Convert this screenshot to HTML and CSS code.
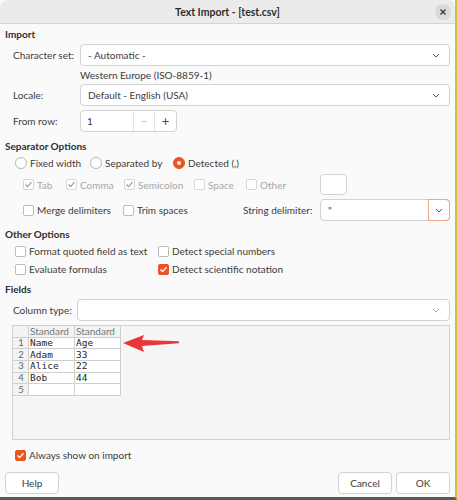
FILE: index.html
```html
<!DOCTYPE html>
<html lang="en">
<head>
    <meta charset="UTF-8">
    <title>Text Import - [test.csv]</title>
    <link rel="stylesheet" href="styles.css">
</head>
<body>
<div class="screen">
<div class="dialog">

    <!-- Window title -->
    <header class="titlebar">
        <span class="title">Text Import - [test.csv]</span>
        <span class="close">
            <svg width="8" height="8" viewBox="0 0 8 8"><path d="M1.5 1.5 L6.5 6.5 M6.5 1.5 L1.5 6.5" stroke="#3a3a3a" stroke-width="1.3"/></svg>
        </span>
    </header>

    <main class="content">

        <!-- Import -->
        <div class="heading">Import</div>
        <div class="field-row">
            <span class="field-label">Character set:</span>
            <div class="combo">
                <span>- Automatic -</span>
                <svg class="chev" width="8" height="5" viewBox="0 0 8 5"><polyline points="1,1 4,4 7,1" fill="none" stroke="#555" stroke-width="1"/></svg>
            </div>
        </div>
        <div class="hint">Western Europe (ISO-8859-1)</div>
        <div class="field-row">
            <span class="field-label">Locale:</span>
            <div class="combo">
                <span>Default - English (USA)</span>
                <svg class="chev" width="8" height="5" viewBox="0 0 8 5"><polyline points="1,1 4,4 7,1" fill="none" stroke="#555" stroke-width="1"/></svg>
            </div>
        </div>
        <div class="field-row spin-row">
            <span class="field-label">From row:</span>
            <div class="spin">
                <span class="spin-value">1</span>
                <span class="spin-btn disabled">&minus;</span>
                <span class="spin-btn">+</span>
            </div>
        </div>

        <!-- Separator Options -->
        <div class="heading sep-heading">Separator Options</div>
        <div class="radio-row">
            <span class="opt"><span class="radio"></span>Fixed width</span>
            <span class="opt"><span class="radio"></span>Separated by</span>
            <span class="opt"><span class="radio on"></span>Detected (,)</span>
        </div>
        <div class="sep-row">
            <span class="opt disabled"><span class="check ticked"><svg width="11" height="11" viewBox="0 0 11 11"><polyline points="2.5,5.5 4.6,7.6 8.5,3.2" fill="none" stroke="#9a9a9a" stroke-width="1.2"/></svg></span>Tab</span>
            <span class="opt disabled"><span class="check ticked"><svg width="11" height="11" viewBox="0 0 11 11"><polyline points="2.5,5.5 4.6,7.6 8.5,3.2" fill="none" stroke="#9a9a9a" stroke-width="1.2"/></svg></span>Comma</span>
            <span class="opt disabled"><span class="check ticked"><svg width="11" height="11" viewBox="0 0 11 11"><polyline points="2.5,5.5 4.6,7.6 8.5,3.2" fill="none" stroke="#9a9a9a" stroke-width="1.2"/></svg></span>Semicolon</span>
            <span class="opt disabled"><span class="check"></span>Space</span>
            <span class="opt disabled"><span class="check"></span>Other</span>
            <span class="other-box"></span>
        </div>
        <div class="delim-row">
            <span class="opt"><span class="check"></span>Merge delimiters</span>
            <span class="opt"><span class="check"></span>Trim spaces</span>
            <span class="delim-label">String delimiter:</span>
            <div class="delim-combo">
                <span class="delim-value">"</span>
                <span class="delim-btn">
                    <svg width="8" height="5" viewBox="0 0 8 5"><polyline points="1,1 4,4 7,1" fill="none" stroke="#555" stroke-width="1"/></svg>
                </span>
            </div>
        </div>

        <!-- Other Options -->
        <div class="heading other-heading">Other Options</div>
        <div class="options-grid">
            <span class="opt"><span class="check"></span>Format quoted field as text</span>
            <span class="opt"><span class="check"></span>Detect special numbers</span>
            <span class="opt"><span class="check"></span>Evaluate formulas</span>
            <span class="opt"><span class="check on"><svg width="11" height="11" viewBox="0 0 11 11"><polyline points="2.5,5.5 4.6,7.6 8.5,3.2" fill="none" stroke="#fff" stroke-width="1.4"/></svg></span>Detect scientific notation</span>
        </div>

        <!-- Fields -->
        <div class="heading fields-heading">Fields</div>
        <div class="field-row col-type">
            <span class="field-label">Column type:</span>
            <div class="combo">
                <span></span>
                <svg class="chev" width="8" height="5" viewBox="0 0 8 5"><polyline points="1,1 4,4 7,1" fill="none" stroke="#aaa" stroke-width="1"/></svg>
            </div>
        </div>
        <div class="preview">
            <table class="grid">
                <tr class="head"><td class="num"></td><td>Standard</td><td>Standard</td></tr>
                <tr><td class="num">1</td><td>Name</td><td>Age</td></tr>
                <tr><td class="num">2</td><td>Adam</td><td>33</td></tr>
                <tr><td class="num">3</td><td>Alice</td><td>22</td></tr>
                <tr><td class="num">4</td><td>Bob</td><td>44</td></tr>
                <tr><td class="num">5</td><td></td><td></td></tr>
            </table>
            <!-- red pointer drawn over the preview -->
            <svg class="pointer" width="58" height="20" viewBox="0 0 58 20">
                <polygon points="0,9 21,1 19,6 56,7.2 56,9.2 19,12 21,18" fill="#e8373a"/>
            </svg>
        </div>
        <div class="always">
            <span class="opt"><span class="check on"><svg width="11" height="11" viewBox="0 0 11 11"><polyline points="2.5,5.5 4.6,7.6 8.5,3.2" fill="none" stroke="#fff" stroke-width="1.4"/></svg></span>Always show on import</span>
        </div>
    </main>

    <footer class="buttons">
        <span class="btn">Help</span>
        <span class="spacer"></span>
        <span class="btn">Cancel</span>
        <span class="btn">OK</span>
    </footer>
</div>
</div>
</body>
</html>
```

FILE: styles.css
```css
body {
    margin: 0;
    padding: 0;
    background-color: #fafafa;
    font-family: Lato, "Liberation Sans", sans-serif;
    font-size: 10px;
    color: #3c3c3c;
    overflow: hidden;
}

/* Desktop edges around the dialog */
.screen {
    width: 455px;
    border-right: 2px solid #c8c43e;
    border-bottom: 3px solid #5a5a5a;
}

.dialog {
    width: 455px;
    height: 497px;
    background-color: #fafafa;
    border-radius: 8px 8px 0 0;
    overflow: hidden;
    display: flex;
    flex-direction: column;
}

/* Title bar */
.titlebar {
    height: 23px;
    background-color: #ebebeb;
    border-bottom: 1px solid #d6d6d6;
    display: grid;
    grid-template-columns: 1fr auto 1fr;
    align-items: center;
    padding-right: 4px;
    padding-left: 4px;
}

.title {
    grid-column: 2;
    font-weight: bold;
    font-size: 10.5px;
    color: #2e2e2e;
}

.close {
    grid-column: 3;
    justify-self: end;
    width: 16px;
    height: 16px;
    border-radius: 50%;
    background-color: #dadada;
    display: flex;
    align-items: center;
    justify-content: center;
}

.content {
    padding: 0 5px 0 5px;
    display: flex;
    flex-direction: column;
}

.heading {
    height: 20px;
    line-height: 20px;
    font-weight: bold;
    color: #2e2e2e;
}

.sep-heading { margin-top: 4px; }
.other-heading { margin-top: 3px; }
.fields-heading { margin-top: 3px; }

/* Label + combo rows */
.field-row {
    height: 22px;
    display: flex;
    align-items: center;
}

.field-label {
    width: 67px;
    padding-left: 8px;
    flex-shrink: 0;
}

.combo {
    flex: 1;
    height: 20px;
    background-color: #fff;
    border: 1px solid #d2d2d2;
    border-radius: 4px;
    display: flex;
    align-items: center;
    justify-content: space-between;
    padding: 0 9px 0 7px;
}

.hint {
    height: 18px;
    line-height: 18px;
    padding-left: 75px;
}

.spin-row { margin-top: 4px; }

.spin {
    width: 95px;
    height: 20px;
    background-color: #fff;
    border: 1px solid #d2d2d2;
    border-radius: 4px;
    display: grid;
    grid-template-columns: 52px 21px 22px;
    align-items: stretch;
}

.spin-value {
    padding-left: 6px;
    display: flex;
    align-items: center;
}

.spin-btn {
    border-left: 1px solid #e2e2e2;
    display: flex;
    align-items: center;
    justify-content: center;
    font-size: 13px;
    color: #444;
}

.spin-btn.disabled {
    color: #cfcfcf;
}

/* Check boxes and radio buttons */
.opt {
    display: flex;
    align-items: center;
    gap: 3px;
    white-space: nowrap;
}

.opt.disabled {
    color: #a6a6a6;
}

.check {
    width: 9px;
    height: 9px;
    border: 1px solid #bcbcbc;
    border-radius: 2px;
    background-color: #fff;
    flex-shrink: 0;
    position: relative;
}

.check svg {
    position: absolute;
    left: -1px;
    top: -1px;
}

.opt.disabled .check {
    border-color: #d6d6d6;
}

.check.on {
    background-color: #e95420;
    border-color: #e95420;
}

.radio {
    width: 10px;
    height: 10px;
    border: 1px solid #b6b6b6;
    border-radius: 50%;
    background-color: #fff;
    flex-shrink: 0;
    display: flex;
    align-items: center;
    justify-content: center;
}

.radio.on {
    background-color: #e95420;
    border-color: #e95420;
}

.radio.on::after {
    content: "";
    width: 4px;
    height: 4px;
    border-radius: 50%;
    background-color: #fff;
}

.radio-row {
    height: 14px;
    padding-left: 10px;
    display: grid;
    grid-template-columns: 75px 83px auto;
    align-items: center;
}

.sep-row {
    margin-top: 4px;
    height: 21px;
    padding-left: 18px;
    display: grid;
    grid-template-columns: 43px 58px 70px 52px 74px 27px;
    align-items: center;
}

.other-box {
    height: 19px;
    background-color: #fff;
    border: 1px solid #d2d2d2;
    border-radius: 4px;
}

.delim-row {
    margin-top: 4px;
    height: 22px;
    padding-left: 18px;
    display: grid;
    grid-template-columns: 100px 120px 77px 130px;
    align-items: center;
}

.delim-combo {
    height: 22px;
    box-sizing: border-box;
    background-color: #fff;
    border: 1px solid #d2d2d2;
    border-radius: 4px;
    display: flex;
    align-items: stretch;
}

.delim-value {
    flex: 1;
    padding-left: 7px;
    display: flex;
    align-items: center;
}

.delim-btn {
    width: 20px;
    margin: -1px -1px -1px 0;
    border: 1px solid #f2a58a;
    border-radius: 0 4px 4px 0;
    display: flex;
    align-items: center;
    justify-content: center;
}

.options-grid {
    padding-left: 10px;
    display: grid;
    grid-template-columns: 143px auto;
    grid-auto-rows: 14px;
    row-gap: 4px;
    align-items: center;
}

.col-type .field-label {
    width: 64px;
}

/* Preview grid */
.preview {
    margin-top: 4px;
    margin-left: 7px;
    height: 113px;
    background-color: #f5f5f5;
    border: 1px solid #d2d2d2;
    position: relative;
}

.grid {
    border-collapse: collapse;
    margin: -1px 0 0 -1px;
    font-family: "DejaVu Sans Mono", "Liberation Mono", monospace;
    font-size: 9.5px;
    color: #1e1e1e;
}

.grid td {
    height: 10.7px;
    padding: 0 0 0 1px;
    line-height: 10px;
    border: 1px solid #cfcfcf;
    background-color: #fff;
    width: 44px;
    vertical-align: middle;
}

.grid td.num {
    width: 14px;
    text-align: center;
    font-family: Lato, "Liberation Sans", sans-serif;
    font-size: 9.5px;
    color: #666;
    background-color: #f3f3f3;
}

.grid tr.head td {
    font-family: Lato, "Liberation Sans", sans-serif;
    font-size: 10px;
    color: #777;
    background-color: #f3f3f3;
}

.pointer {
    position: absolute;
    left: 110px;
    top: 8px;
}

.always {
    margin-top: 8px;
    height: 14px;
    padding-left: 10px;
    display: flex;
    align-items: center;
}

/* Dialog buttons */
.buttons {
    margin-top: 10px;
    padding: 0 5px;
    display: flex;
    gap: 4px;
}

.spacer {
    flex: 1;
}

.btn {
    width: 52px;
    height: 20px;
    background-color: #fff;
    border: 1px solid #d2d2d2;
    border-radius: 4px;
    display: flex;
    align-items: center;
    justify-content: center;
    color: #3c3c3c;
}
```
